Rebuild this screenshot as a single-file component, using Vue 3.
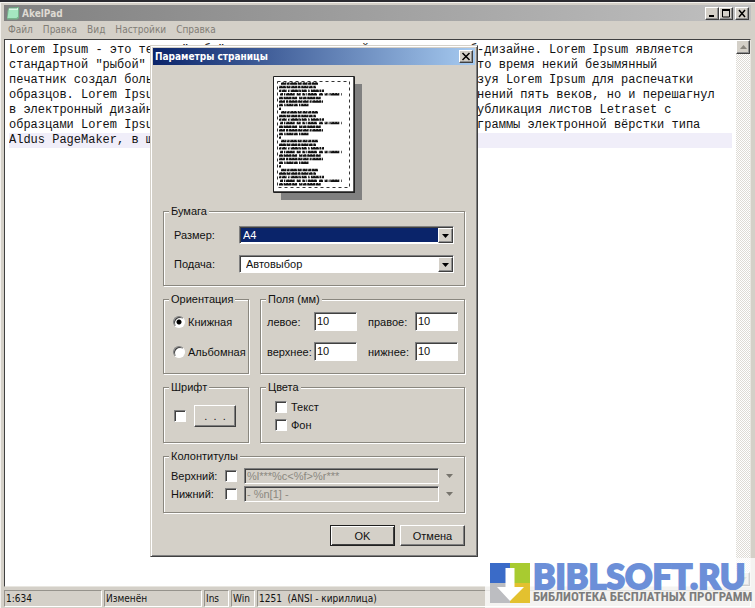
<script setup>
import { ref } from 'vue'

const menu = ['Файл', 'Правка', 'Вид', 'Настройки', 'Справка']
const text = ref([
  'Lorem Ipsum - это текст-"рыба", часто используемый в печати и вэб-дизайне. Lorem Ipsum является',
  'стандартной "рыбой" для текстов на латинице с начала XVI века. В то время некий безымянный',
  'печатник создал большую коллекцию размеров и форм шрифтов, используя Lorem Ipsum для распечатки',
  'образцов. Lorem Ipsum не только успешно пережил без заметных изменений пять веков, но и перешагнул',
  'в электронный дизайн. Его популяризации в новое время послужили публикация листов Letraset с',
  'образцами Lorem Ipsum в 60-х годах и, в более недавнее время, программы электронной вёрстки типа',
  'Aldus PageMaker, в шаблонах которых используется Lorem Ipsum.',
].join('\n'))

const size = ref('A4')
const source = ref('Автовыбор')
const orientation = ref('portrait')
const margins = ref([
  { id: 'left', label: 'левое:', value: '10' },
  { id: 'right', label: 'правое:', value: '10' },
  { id: 'top', label: 'верхнее:', value: '10' },
  { id: 'bottom', label: 'нижнее:', value: '10' },
])
const running = ref([
  { id: 'header', label: 'Верхний:', value: '%l***%c<%f>%r***', on: false },
  { id: 'footer', label: 'Нижний:', value: '- %n[1] -', on: false },
])

// Greeked lines of the page thumbnail: start, end, dash pattern
const pattern = [
  [8, 45, '5 .6 3 .5 7 .6 4 .8'],
  [6, 43, '7 .5 4 .6 6 .5 3 .6'],
  [6, 51, '2 .6 5 1.4 1.5 1.2 8 .5'],
  [7, 69, '3 1 1 .7 9 2 4 1.6'],
  [6, 48, '4 .6 8 .5 5 2 3 .5'],
  [6, 50, '6 1 2 .6 9 .5 4 .5'],
  [6, 36, '4 1.2 1.5 .6 7 .5'],
  [6, 8, '2 0'],
]
const pageLines = Array.from({ length: 29 }, (_, i) => {
  const [x1, x2, dash] = pattern[i % 8]
  return { x1, x2, dash, y: 7.5 + i * 3.6 }
})
</script>

<template>
  <main class="window">
    <header class="titlebar">
      <svg class="app-icon" viewBox="0 0 14 14" aria-hidden="true">
        <path d="M3 1.5 13 1v11L11 13.500H1L1.500 5z" fill="#78b48c" />
        <path d="M3 2h9v8.500L10.500 12H1.500z" fill="#a5e6c0" />
        <path d="M3 2h9v2H3z" fill="#d9f7e4" />
        <path d="M4 1v2M6 1v2M8 1v2M10 1v2" stroke="#5d8b70" stroke-width=".7" />
      </svg>
      <h1>AkelPad</h1>
      <div class="win-buttons">
        <button class="raised" aria-label="Свернуть">
          <svg viewBox="0 0 10 9"><path d="M2 7h5" stroke="#000" stroke-width="2" /></svg>
        </button>
        <button class="raised" aria-label="Развернуть">
          <svg viewBox="0 0 10 9"><path d="M1.500 1v7h7V1M1 1h8" fill="none" stroke="#000" /><path d="M1 1h8" stroke="#000" stroke-width="2" /></svg>
        </button>
        <button class="raised close" aria-label="Закрыть">
          <svg viewBox="0 0 10 9"><path d="m2 1 6 7M8 1 2 8" stroke="#000" stroke-width="1.500" /></svg>
        </button>
      </div>
    </header>

    <nav class="menu">
      <a v-for="m in menu" :key="m" href="#">{{ m }}</a>
    </nav>

    <div class="editor">
      <textarea v-model="text" aria-label="Текст" wrap="off" spellcheck="false"></textarea>
      <div class="scrollbar">
        <button class="raised" aria-label="Вверх"><svg viewBox="0 0 7 4"><path d="M3.500 0 7 4H0z" fill="#8a867e" /></svg></button>
        <button class="raised" aria-label="Вниз"><svg viewBox="0 0 7 4"><path d="M0 0h7L3.500 4z" fill="#8a867e" /></svg></button>
      </div>
    </div>

    <footer class="status">
      <span class="cell wide">1:634</span>
      <span class="cell wide">Изменён</span>
      <span class="cell ins">Ins</span>
      <span class="cell win">Win</span>
      <span class="cell rest">1251&nbsp; (ANSI - кириллица)</span>
    </footer>

    <section class="dialog" role="dialog" aria-labelledby="dialog-title">
      <header class="dialog-title">
        <h2 id="dialog-title">Параметры страницы</h2>
        <button class="raised" aria-label="Закрыть">
          <svg viewBox="0 0 10 9"><path d="m1.500 1 7 7M8.500 1l-7 7" stroke="#000" stroke-width="1.500" /></svg>
        </button>
      </header>

      <form class="dialog-body" @submit.prevent>
        <svg class="preview" viewBox="0 0 89 124" aria-hidden="true">
          <path d="M8 8h81v116H8z" fill="#808080" />
          <path d="M.5.500h81v116H.5z" fill="#fff" stroke="#222" />
          <path d="M81 1v116M1 116h81" stroke="#222" stroke-width="1.500" />
          <path d="M4.500 5.500h72v106h-72z" fill="none" stroke="#333" stroke-dasharray="3 3" />
          <line
            v-for="(l, i) in pageLines" :key="i"
            :x1="l.x1" :x2="l.x2" :y1="l.y" :y2="l.y"
            :stroke-dasharray="l.dash" stroke="#111" stroke-width="2.500"
          />
          <line
            v-for="(l, i) in pageLines" :key="'t' + i"
            :x1="l.x1" :x2="l.x2" :y1="l.y - 1" :y2="l.y - 1"
            stroke="#fff" stroke-width="1" stroke-dasharray="1.300 1.700" opacity=".6"
          />
        </svg>

        <fieldset class="full paper">
          <legend>Бумага</legend>
          <div class="paper-grid">
            <label for="size">Размер:</label>
            <div class="combo focused">
              <select id="size" v-model="size"><option>A4</option></select>
              <span class="raised arrow"><svg viewBox="0 0 7 4"><path d="M0 0h7L3.500 4z" /></svg></span>
            </div>
            <label for="source">Подача:</label>
            <div class="combo">
              <select id="source" v-model="source"><option>Автовыбор</option></select>
              <span class="raised arrow"><svg viewBox="0 0 7 4"><path d="M0 0h7L3.500 4z" /></svg></span>
            </div>
          </div>
        </fieldset>

        <fieldset>
          <legend>Ориентация</legend>
          <div class="radios">
            <label><input v-model="orientation" type="radio" name="orientation" value="portrait" />Книжная</label>
            <label><input v-model="orientation" type="radio" name="orientation" value="landscape" />Альбомная</label>
          </div>
        </fieldset>

        <fieldset>
          <legend>Поля (мм)</legend>
          <div class="margins">
            <div v-for="m in margins" :key="m.id" class="margin">
              <label :for="m.id">{{ m.label }}</label>
              <input :id="m.id" v-model="m.value" type="text" class="sunken" />
            </div>
          </div>
        </fieldset>

        <fieldset>
          <legend>Шрифт</legend>
          <div class="font-row">
            <input type="checkbox" aria-label="Шрифт" />
            <button type="button" class="push dots">.&nbsp; .&nbsp; .</button>
          </div>
        </fieldset>

        <fieldset>
          <legend>Цвета</legend>
          <div class="colors">
            <label><input type="checkbox" />Текст</label>
            <label><input type="checkbox" />Фон</label>
          </div>
        </fieldset>

        <fieldset class="full">
          <legend>Колонтитулы</legend>
          <div class="running">
            <div v-for="r in running" :key="r.id" class="running-row">
              <label :for="r.id">{{ r.label }}</label>
              <input :id="r.id" v-model="r.on" type="checkbox" />
              <input v-model="r.value" type="text" class="sunken" :disabled="!r.on" :aria-label="r.label" />
              <svg viewBox="0 0 7 4"><path d="M0 0h7L3.500 4z" fill="#77746d" /></svg>
            </div>
          </div>
        </fieldset>

        <div class="full actions">
          <button type="submit" class="push default">OK</button>
          <button type="button" class="push">Отмена</button>
        </div>
      </form>
    </section>

    <aside class="watermark">
      <svg viewBox="0 0 40 40" aria-hidden="true">
        <path d="M0 0h20v20H0z" fill="#3a6bc8" />
        <path d="M20 0h20v20H20z" fill="#a8cb30" />
        <path d="M0 20h20v20H0z" fill="#bcbdc1" />
        <path d="M20 20h20v20H20z" fill="#e3c12f" />
        <path d="M15.500 5h9v19H34L20 38 7 24h8.500z" fill="#fff" />
      </svg>
      <div>
        <strong>BIBLSOFT.RU</strong>
        <span>БИБЛИОТЕКА БЕСПЛАТНЫХ ПРОГРАММ</span>
      </div>
    </aside>
  </main>
</template>

<style>
body {
  background: #d4d0c8;
}
</style>

<style scoped>
* {
  box-sizing: border-box;
}

.window {
  position: relative;
  display: flex;
  flex-direction: column;
  min-height: 100vh;
  padding: 3px 4px 1px;
  border-top: 2px solid #2a2a30;
  background: #d4d0c8;
  box-shadow: inset 1px 1px 0 #f4f2ee;
  font-family: "DejaVu Sans Condensed", "DejaVu Sans", sans-serif;
  font-size: 10px;
  color: #111;
}

button,
input,
select {
  margin: 0;
  padding: 0;
  font: inherit;
  color: inherit;
}

.raised {
  display: flex;
  align-items: center;
  justify-content: center;
  border: 1px solid;
  border-color: #fff #404040 #404040 #fff;
  background: #d4d0c8;
  box-shadow: inset -1px -1px 0 #909090;
}

.titlebar {
  display: flex;
  align-items: center;
  height: 16px;
  padding: 0 2px;
  background: linear-gradient(90deg, #808080, #c0c0c0);
}

.app-icon {
  width: 14px;
  height: 14px;
}

h1,
h2 {
  flex: 1;
  margin: 0;
  font-size: 10px;
  font-weight: bold;
}

h1 {
  padding-left: 2px;
  color: #dedad2;
}

.win-buttons {
  display: flex;
}

.win-buttons button,
.dialog-title button {
  width: 14px;
  height: 13px;
}

.win-buttons .close {
  margin-left: 2px;
}

.win-buttons svg,
.dialog-title svg {
  width: 10px;
  height: 9px;
}

.menu {
  display: flex;
  gap: 10px;
  height: 18px;
  padding: 0 4px;
  line-height: 18px;
}

.menu a {
  color: #817d76;
  text-decoration: none;
}

.editor {
  display: flex;
  flex: 1;
  border: 1px solid;
  border-color: #404040 #e8e6e0 #e8e6e0 #404040;
  background: #fff;
}

textarea {
  flex: 1;
  min-width: 0;
  margin: 3px 4px 0;
  padding: 0;
  border: 0;
  outline: 0;
  resize: none;
  overflow: hidden;
  background: linear-gradient(#f0eef9, #f0eef9) 0 90px / 100% 15px no-repeat;
  font: 12px/15px "Liberation Mono", monospace;
  color: #111;
}

.scrollbar {
  display: flex;
  flex-direction: column;
  justify-content: space-between;
  width: 14px;
  background: repeating-conic-gradient(#fff 0 25%, #dedbd5 0 50%) 0 0 / 2px 2px;
}

.scrollbar button {
  width: 14px;
  height: 14px;
}

.scrollbar svg,
.arrow svg {
  width: 7px;
  height: 4px;
}

.status {
  display: flex;
  gap: 2px;
  padding-top: 3px;
}

.cell {
  height: 17px;
  padding-left: 1px;
  border: 1px solid;
  border-color: #96938c #fff #fff #96938c;
  line-height: 15px;
  white-space: nowrap;
}

.wide {
  width: 98px;
}

.ins {
  width: 25px;
}

.win {
  width: 24px;
}

.rest {
  flex: 1;
}

.dialog {
  position: absolute;
  top: 43px;
  left: 150px;
  width: 328px;
  padding: 1px;
  border: 1px solid;
  border-color: #d4d0c8 #404040 #404040 #d4d0c8;
  background: #d4d0c8;
  box-shadow: inset 1px 1px 0 #fff, inset -1px -1px 0 #808080;
  font-family: "Liberation Sans", Arial, sans-serif;
  font-size: 11px;
}

.dialog-title {
  display: flex;
  align-items: center;
  height: 17px;
  margin: 1px 1px 0;
  padding: 0 2px;
  background: linear-gradient(90deg, #0a246a, #a6caf0);
  font-family: "DejaVu Sans Condensed", "DejaVu Sans", sans-serif;
  color: #fff;
}

.dialog-body {
  display: grid;
  grid-template-columns: 86px 1fr;
  gap: 7px 11px;
  padding: 11px 11px 9px;
}

.full {
  grid-column: 1 / -1;
}

.preview {
  grid-column: 1 / -1;
  width: 89px;
  height: 124px;
  margin: 0 0 -2px 110px;
}

fieldset {
  min-width: 0;
  margin: 0;
  padding: 0;
  border: 1px solid #8a877f;
  box-shadow: 1px 1px 0 #fff, inset 1px 1px 0 #fff;
}

legend {
  height: 13px;
  margin-left: 5px;
  padding: 0 2px;
  background: #d4d0c8;
  line-height: 13px;
}

.paper-grid {
  display: grid;
  grid-template-columns: 65px 1fr;
  grid-auto-rows: 18px;
  gap: 11px 0;
  align-items: center;
  padding: 8px 10px 12px;
}

.combo {
  position: relative;
  height: 18px;
  padding: 1px;
  border: 1px solid;
  border-color: #808080 #fff #fff #808080;
  background: #fff;
  box-shadow: inset 1px 1px 0 #404040;
}

.combo select {
  display: block;
  width: 100%;
  height: 14px;
  padding-left: 5px;
  border: 0;
  outline: 0;
  appearance: none;
  background: #fff;
  line-height: 14px;
}

.combo.focused select {
  padding-left: 2px;
  background: #0a246a;
  color: #fff;
}

.arrow {
  position: absolute;
  top: 1px;
  right: 0;
  width: 15px;
  height: 15px;
  pointer-events: none;
}

.sunken {
  min-width: 0;
  border: 1px solid;
  border-color: #808080 #fff #fff #808080;
  background: #fff;
  box-shadow: inset 1px 1px 0 #404040;
}

input[type="checkbox"],
input[type="radio"] {
  flex: none;
  width: 12px;
  height: 12px;
  appearance: none;
  border: 1px solid;
  border-color: #808080 #fff #fff #808080;
  background: #fff;
  box-shadow: inset 1px 1px 0 #404040;
}

input[type="radio"] {
  border-radius: 50%;
}

input[type="radio"]:checked {
  background: radial-gradient(circle at 5px 5px, #000 0 2px, #fff 3px);
}

.radios {
  display: grid;
  grid-auto-rows: 19px;
  gap: 11px;
  padding: 6px 0 12px 9px;
}

.radios label,
.colors label {
  display: flex;
  align-items: center;
  gap: 4px;
  white-space: nowrap;
}

.radios label {
  gap: 3px;
}

.margins {
  display: grid;
  grid-template-columns: 1fr 1fr;
  gap: 11px;
  padding: 6px 6px 12px;
}

.margin {
  display: flex;
  align-items: center;
  justify-content: space-between;
}

.margin input {
  width: 43px;
  height: 19px;
  padding: 0 2px 1px;
}

.font-row {
  display: flex;
  align-items: center;
  gap: 8px;
  padding: 11px 0 15px 10px;
}

.push {
  width: 65px;
  height: 21px;
  border: 1px solid;
  border-color: #fff #404040 #404040 #fff;
  background: #d4d0c8;
  box-shadow: inset -1px -1px 0 #808080;
}

.push.dots {
  width: 42px;
  height: 22px;
}

.push.default {
  border-color: #202020;
  box-shadow: inset 1px 1px 0 #fff, inset -1px -1px 0 #404040;
}

.colors {
  display: grid;
  grid-auto-rows: 18px;
  padding: 4px 0 8px 14px;
}

.running {
  display: grid;
  gap: 2px;
  padding: 5px 11px 10px 7px;
}

.running-row {
  display: grid;
  grid-template-columns: 54px 12px 1fr 7px;
  align-items: center;
}

.running-row .sunken {
  height: 16px;
  margin: 0 7px;
  padding: 0 2px 1px;
}

.running-row .sunken:disabled {
  background: #d4d0c8;
  color: #8b8880;
}

.running-row svg {
  width: 7px;
  height: 4px;
}

.actions {
  display: flex;
  justify-content: flex-end;
  gap: 5px;
  margin-top: 5px;
}

.watermark {
  position: absolute;
  right: 0;
  bottom: 0;
  display: flex;
  gap: 3px;
  width: 270px;
  height: 50px;
  padding: 5px;
  background: rgb(255 255 255 / 75%);
}

.watermark svg {
  flex: none;
  width: 40px;
  height: 40px;
}

.watermark div {
  display: flex;
  flex-direction: column;
  justify-content: space-between;
}

.watermark strong {
  font: 900 34px/26px Lato, sans-serif;
  color: #6c8fd8;
  -webkit-text-stroke: 2px #6c8fd8;
}

.watermark span {
  font: bold 13px/12px "Roboto Condensed", "Liberation Sans Narrow", sans-serif;
  color: #7c7c7c;
  white-space: nowrap;
}
</style>
